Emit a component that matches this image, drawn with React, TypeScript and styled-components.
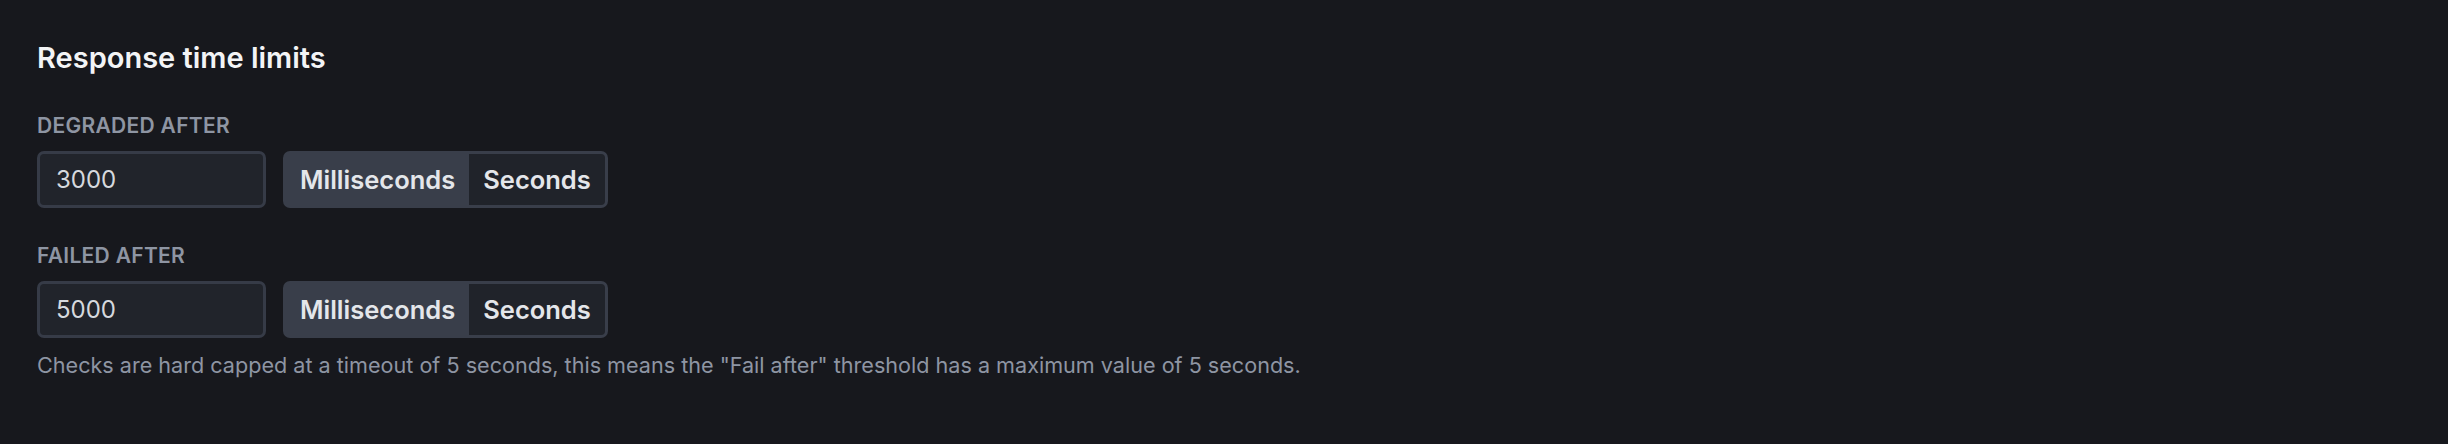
import React, { useState } from 'react';
import styled, { createGlobalStyle } from 'styled-components';

const GlobalStyle = createGlobalStyle`
  html, body {
    margin: 0;
    padding: 0;
    background: #17181d;
    font-family: Inter, "Noto Sans", sans-serif;
  }
`;

const Page = styled.div`
  min-height: 444px;
  background: #17181d;
  padding: 38px 37px 0;
  box-sizing: border-box;
`;

const Title = styled.h2`
  margin: 0 0 34px;
  font-size: 29px;
  line-height: 40px;
  font-weight: 600;
  color: #f3f4f6;
`;

const Field = styled.div`
  display: flex;
  flex-direction: column;
  gap: 11px;
  margin-bottom: 34px;

  &:last-of-type {
    margin-bottom: 0;
  }
`;

const Label = styled.label`
  font-size: 21px;
  line-height: 28px;
  font-weight: 600;
  text-transform: uppercase;
  letter-spacing: 0.3px;
  color: #8e95a3;
`;

const Row = styled.div`
  display: flex;
  align-items: center;
  gap: 17px;
`;

const Input = styled.input`
  box-sizing: border-box;
  width: 229px;
  height: 57px;
  padding: 0 16px;
  border: 3px solid #363b47;
  border-radius: 7px;
  background: #21242b;
  color: #d6d9de;
  font-family: inherit;
  font-size: 24px;

  &:focus {
    outline: none;
  }
`;

const Segmented = styled.div`
  display: flex;
  box-sizing: border-box;
  height: 57px;
  padding: 3px;
  border-radius: 7px;
  background: #393e4a;
`;

const SegmentButton = styled.button<{ $active: boolean }>`
  display: flex;
  align-items: center;
  padding: 0 14px;
  border: none;
  border-radius: ${(p) => (p.$active ? '4px' : '0 4px 4px 0')};
  background: ${(p) => (p.$active ? 'transparent' : '#20232a')};
  color: #e4e6ea;
  font-family: inherit;
  font-size: 25.5px;
  font-weight: 600;
  cursor: pointer;
`;

const Help = styled.p`
  margin: 12px 0 0;
  font-size: 21.6px;
  line-height: 30px;
  color: #8e95a3;
`;

type Unit = 'ms' | 's';

function LimitField({ label, initial }: { label: string; initial: string }) {
  const [value, setValue] = useState(initial);
  const [unit, setUnit] = useState<Unit>('ms');

  return (
    <Field>
      <Label>{label}</Label>
      <Row>
        <Input type="text" value={value} onChange={(e) => setValue(e.target.value)} />
        <Segmented>
          <SegmentButton $active={unit === 'ms'} onClick={() => setUnit('ms')}>
            Milliseconds
          </SegmentButton>
          <SegmentButton $active={unit === 's'} onClick={() => setUnit('s')}>
            Seconds
          </SegmentButton>
        </Segmented>
      </Row>
    </Field>
  );
}

export default function App() {
  return (
    <>
      <GlobalStyle />
      <Page>
        <Title>Response time limits</Title>
        <LimitField label="Degraded after" initial="3000" />
        <LimitField label="Failed after" initial="5000" />
        <Help>
          Checks are hard capped at a timeout of 5 seconds, this means the "Fail after" threshold has a maximum
          value of 5 seconds.
        </Help>
      </Page>
    </>
  );
}
